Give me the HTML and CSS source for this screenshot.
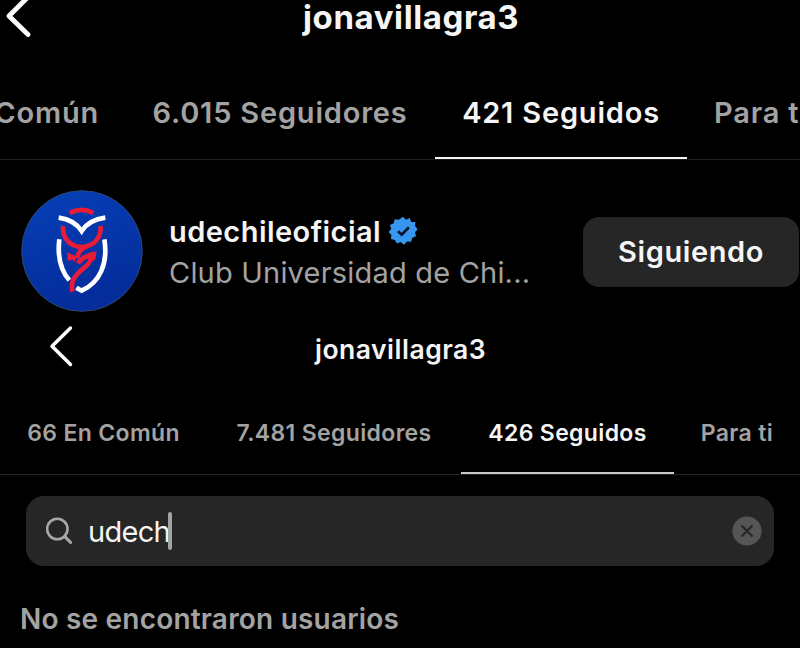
FILE: index.html
```html
<!DOCTYPE html>
<html lang="es">
<head>
<meta charset="UTF-8">
<meta name="viewport" content="width=device-width, initial-scale=1.0">
<title>jonavillagra3</title>
<link rel="stylesheet" href="styles.css">
</head>
<body>

<section class="panel panel-large">
    <header class="header">
        <svg class="back" width="34" height="46" viewBox="0 0 34 46">
            <path d="M28 -3L9 16L28 34.5" fill="none" stroke="#fff" stroke-width="4.8" stroke-linecap="round" stroke-linejoin="round"/>
        </svg>
        <h1 class="title"><span>jonavillagra3</span></h1>
    </header>
    <nav class="tabs">
        <a class="tab tab-common"><span>Común</span></a>
        <a class="tab tab-followers"><span>6.015 Seguidores</span></a>
        <a class="tab tab-following active"><span>421 Seguidos</span></a>
        <a class="tab tab-foryou"><span>Para ti</span></a>
    </nav>
    <div class="user">
        <svg class="avatar" viewBox="33 32 366 366">
            <defs>
                <linearGradient id="blue" x1="0" y1="0" x2="0.3" y2="1">
                    <stop offset="0" stop-color="#0640b8"/>
                    <stop offset="1" stop-color="#042c9a"/>
                </linearGradient>
            </defs>
            <circle cx="216" cy="215" r="181" fill="url(#blue)" stroke="#30466f" stroke-width="3"/>
            <g fill="none" stroke="#e91c38" stroke-width="14">
                <path d="M179 101Q215 82 250 101"/>
                <path d="M159 140C157 174 176 201 215 203C254 201 274 174 272 140"/>
                <path d="M236 199C216 206 203 218 202 237"/>
                <path d="M187 337C183 308 189 296 210 276C231 259 244 248 248 225"/>
                <path d="M204 252C211 238 226 231 251 223"/>
            </g>
            <path d="M172 219L199 231L194 249L188 241L173 244Z" fill="#e91c38"/>
            <path d="M215 230L260 216L255 243L237 240Z" fill="#e91c38"/>
            <g fill="none" stroke="#fff" stroke-width="14">
                <path d="M146 115C174 119 200 132 215 155C230 132 256 119 286 115"/>
                <path d="M148 180C142 231 151 272 178 303"/>
                <path d="M283 180C295 253 269 310 215 334L199 325"/>
            </g>
        </svg>
        <div class="user-info">
            <div class="user-name">
                <span>udechileoficial</span>
                <svg class="verified" width="30" height="30" viewBox="0 0 30 30">
                    <path d="M15 .8L18 3.7L21.7 2.1L23.2 5.9L27.3 6L27.1 10.1L29.6 13.2L27 16.3L28 20.3L24.2 21.8L23.1 25.8L19 25.4L15.9 28.8L12.7 26.1L8.8 27.5L7 23.9L2.9 23.1L3.4 19L.6 16L3.2 12.9L2 8.9L5.7 7.3L6.7 3.2L10.8 3.8Z" fill="#3797f0"/>
                    <path d="M10 15.2L13.7 18.7L21 11.3" fill="none" stroke="#05162b" stroke-width="2.7"/>
                </svg>
            </div>
            <div class="user-fullname">Club Universidad de Chi...</div>
        </div>
        <button class="follow-btn">Siguiendo</button>
    </div>
</section>

<section class="panel panel-small">
    <header class="header">
        <svg class="back" width="30" height="44" viewBox="0 0 30 44">
            <path d="M23.5 3L5 21.2L23.5 39.5" fill="none" stroke="#fff" stroke-width="3.5" stroke-linecap="round" stroke-linejoin="round"/>
        </svg>
        <h2 class="title"><span>jonavillagra3</span></h2>
    </header>
    <nav class="tabs">
        <a class="tab tab-common"><span>66 En Común</span></a>
        <a class="tab tab-followers"><span>7.481 Seguidores</span></a>
        <a class="tab tab-following active"><span>426 Seguidos</span></a>
        <a class="tab tab-foryou"><span>Para ti</span></a>
    </nav>
    <div class="search">
        <svg class="search-icon" width="28" height="28" viewBox="0 0 28 28">
            <circle cx="11.3" cy="12" r="10.2" fill="none" stroke="#a8a8a8" stroke-width="2.6"/>
            <path d="M18.8 19.6L24.6 25.4" stroke="#a8a8a8" stroke-width="3" stroke-linecap="round"/>
        </svg>
        <span class="search-text">udech</span>
        <span class="caret"></span>
        <svg class="clear" width="30" height="30" viewBox="0 0 30 30">
            <circle cx="15" cy="15" r="14.6" fill="#555"/>
            <path d="M9.5 9.5L20.5 20.5M20.5 9.5L9.5 20.5" stroke="#262626" stroke-width="2"/>
        </svg>
    </div>
    <p class="empty">No se encontraron usuarios</p>
</section>

</body>
</html>
```
FILE: styles.css
```css
/* Basic styles */
* {
    box-sizing: border-box;
}

body {
    margin: 0;
    height: 648px;
    overflow: hidden;
    background-color: #000;
    color: #f5f5f5;
    font-family: Inter, Roboto, sans-serif;
}

.panel {
    width: 800px;
    overflow: hidden;
}

.panel-large {
    height: 320px;
}

.panel-small {
    height: 328px;
}

/* Header */
.header {
    display: flex;
    align-items: flex-start;
}

.title {
    margin: 0;
    font-weight: 700;
    white-space: nowrap;
}

.panel-large .header {
    height: 66px;
}

.panel-large .title {
    margin-left: 269px;
    font-size: 33px;
    line-height: 35px;
    letter-spacing: 0.6px;
}

.panel-small .header {
    height: 72px;
    padding: 5px 0 0 47px;
}

.panel-small .title {
    margin: 9px 0 0 238px;
    font-size: 26.5px;
    line-height: 30px;
    font-weight: 600;
    letter-spacing: 0.5px;
}

/* Tabs */
.tabs {
    display: flex;
    border-bottom: 1px solid #1c1c1c;
    font-weight: 600;
    color: #a3a3a3;
}

.tab {
    display: flex;
    flex: none;
    justify-content: center;
    align-items: center;
    white-space: nowrap;
}

.tab.active {
    padding-top: 2px;
    color: #f5f5f5;
    border-bottom: 2px solid #f5f5f5;
}

.panel-large .tabs {
    height: 94px;
    font-size: 29px;
    letter-spacing: 0.8px;
}

.panel-large .tab-common {
    width: 125px;
    justify-content: flex-end;
    padding-right: 26px;
}

.panel-large .tab-followers {
    width: 310px;
}

.panel-large .tab-following {
    width: 252px;
}

.panel-large .tab-foryou {
    padding-left: 27px;
}

.panel-small .tabs {
    height: 83px;
    font-size: 23px;
    border-bottom-color: #262626;
    letter-spacing: 0.35px;
}

.panel-small .tab-common {
    width: 207px;
}

.panel-small .tab-followers {
    width: 254px;
}

.panel-small .tab-following {
    width: 213px;
    border-bottom-color: #c8c8c8;
}

.panel-small .tab-foryou {
    width: 126px;
}

/* User row */
.user {
    display: flex;
    align-items: flex-start;
    padding: 30px 1px 0 21px;
}

.avatar {
    flex: none;
    width: 122px;
    height: 122px;
}

.user-info {
    flex: none;
    width: 414px;
    margin: 21px 0 0 26px;
    white-space: nowrap;
}

.user-name {
    display: flex;
    align-items: center;
    gap: 7px;
    height: 40px;
    font-size: 29px;
    font-weight: 600;
    letter-spacing: 0.45px;
}

.user-fullname {
    height: 42px;
    font-size: 29px;
    line-height: 43px;
    color: #a3a3a3;
    letter-spacing: 0.2px;
}

.follow-btn {
    width: 216px;
    height: 70px;
    margin-top: 27px;
    padding: 0 0 2px;
    border: none;
    border-radius: 16px;
    background-color: #262626;
    color: #f5f5f5;
    font-family: inherit;
    font-size: 29px;
    font-weight: 600;
    letter-spacing: 0.6px;
}

/* Search */
.search {
    display: flex;
    align-items: center;
    width: 748px;
    height: 70px;
    margin: 21px 26px 0;
    padding: 0 12px 0 20px;
    border-radius: 18px;
    background-color: #262626;
}

.search-text {
    margin-left: 14px;
    font-size: 29px;
    letter-spacing: -0.7px;
}

.caret {
    width: 4px;
    height: 38px;
    margin-left: -2px;
    border-radius: 2px;
    background-color: #a3a3a3;
}

.clear {
    margin-left: auto;
}

.empty {
    margin: 35px 0 0 20px;
    font-size: 28px;
    line-height: 36px;
    font-weight: 600;
    color: #a3a3a3;
    letter-spacing: 0.2px;
    white-space: nowrap;
}
```
